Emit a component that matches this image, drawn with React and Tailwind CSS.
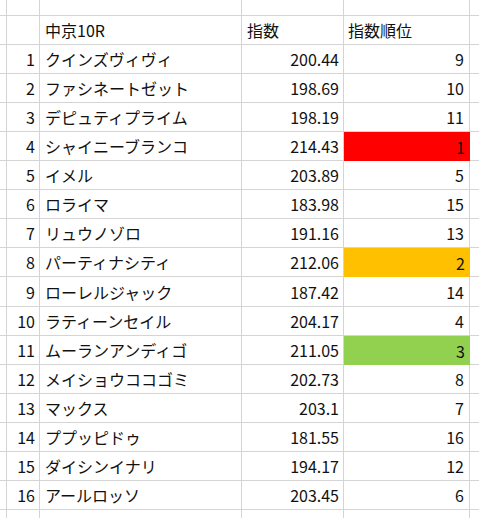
import React from "react";

const rows = [
  ["クインズヴィヴィ", "200.44", "9", ""],
  ["ファシネートゼット", "198.69", "10", ""],
  ["デピュティプライム", "198.19", "11", ""],
  ["シャイニーブランコ", "214.43", "1", "bg-[#ff0000]"],
  ["イメル", "203.89", "5", ""],
  ["ロライマ", "183.98", "15", ""],
  ["リュウノゾロ", "191.16", "13", ""],
  ["パーティナシティ", "212.06", "2", "bg-[#ffc000]"],
  ["ローレルジャック", "187.42", "14", ""],
  ["ラティーンセイル", "204.17", "4", ""],
  ["ムーランアンディゴ", "211.05", "3", "bg-[#92d050]"],
  ["メイショウココゴミ", "202.73", "8", ""],
  ["マックス", "203.1", "7", ""],
  ["ププッピドゥ", "181.55", "16", ""],
  ["ダイシンイナリ", "194.17", "12", ""],
  ["アールロッソ", "203.45", "6", ""],
];

const font = { fontFamily: '"Noto Sans CJK JP", "Noto Sans", sans-serif' };

function Row({ h, a = "", b = "", c = "", d = "", fill = "" }) {
  return (
    <div className={`flex ${h} border-b border-[#d4d4d4]`}>
      <div className="w-[7px] shrink-0 border-r border-[#d4d4d4]" />
      <div className="w-[33px] shrink-0 border-r border-[#d4d4d4] flex items-center justify-end pr-[4px]">
        {a}
      </div>
      <div className="w-[202px] shrink-0 border-r border-[#d4d4d4] flex items-center pl-[5px] whitespace-nowrap">
        {b}
      </div>
      <div className="w-[102px] shrink-0 border-r border-[#d4d4d4] flex items-center justify-end pr-[4px]">
        {c}
      </div>
      <div
        className={`w-[126px] shrink-0 flex items-center justify-end pr-[5px] ${
          fill ? fill + " -mb-px" : "border-r border-[#d4d4d4]"
        }`}
      >
        {d}
      </div>
      <div className="flex-1" />
    </div>
  );
}

export default function App() {
  return (
    <div
      className="w-[479px] h-[518px] overflow-hidden bg-white text-[16px] leading-none text-[#111]"
      style={font}
    >
      <Row h="h-[16px]" />
      <Row
        h="h-[29px]"
        b="中京10R"
        c={<span className="mr-auto pl-[5px]">指数</span>}
        d={<span className="mr-auto pl-[4px]">指数順位</span>}
      />
      {rows.map((r, i) => (
        <Row
          key={i}
          h={i === 8 ? "h-[30px]" : "h-[29px]"}
          a={String(i + 1)}
          b={r[0]}
          c={r[1]}
          d={r[2]}
          fill={r[3]}
        />
      ))}
      <Row h="h-[29px]" />
    </div>
  );
}
